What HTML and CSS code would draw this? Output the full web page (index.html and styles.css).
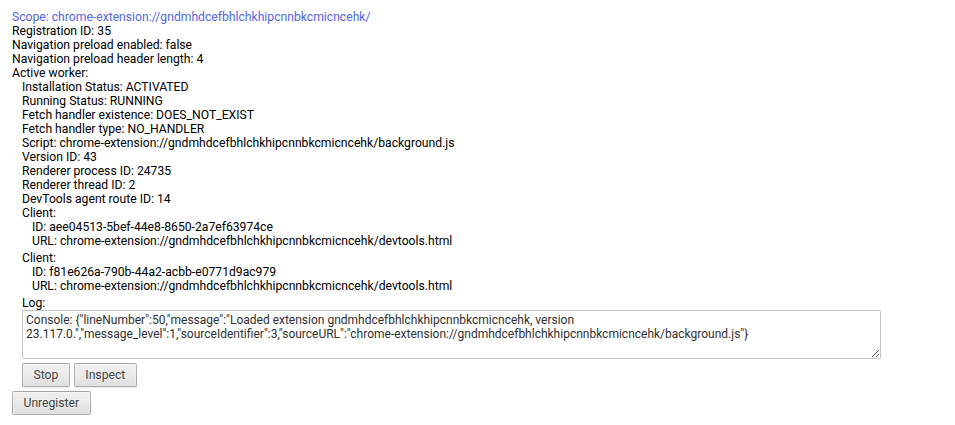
FILE: index.html
```html
<!DOCTYPE html>
<html>
<head>
<meta charset="utf-8">
<link rel="stylesheet" href="styles.css">
</head>
<body>
<div class="registration">
  <div class="scope">Scope: chrome-extension://gndmhdcefbhlchkhipcnnbkcmicncehk/</div>
  <div class="line">Registration ID: 35</div>
  <div class="line">Navigation preload enabled: false</div>
  <div class="line">Navigation preload header length: 4</div>
  <div class="line">Active worker:</div>
  <div class="worker">
    <div class="line">Installation Status: ACTIVATED</div>
    <div class="line">Running Status: RUNNING</div>
    <div class="line">Fetch handler existence: DOES_NOT_EXIST</div>
    <div class="line">Fetch handler type: NO_HANDLER</div>
    <div class="line">Script: chrome-extension://gndmhdcefbhlchkhipcnnbkcmicncehk/background.js</div>
    <div class="line">Version ID: 43</div>
    <div class="line">Renderer process ID: 24735</div>
    <div class="line">Renderer thread ID: 2</div>
    <div class="line">DevTools agent route ID: 14</div>
    <div class="client">
      <div class="line">Client:</div>
      <div class="client-info">
        <div class="line">ID: aee04513-5bef-44e8-8650-2a7ef63974ce</div>
        <div class="line">URL: chrome-extension://gndmhdcefbhlchkhipcnnbkcmicncehk/devtools.html</div>
      </div>
    </div>
    <div class="client">
      <div class="line">Client:</div>
      <div class="client-info">
        <div class="line">ID: f81e626a-790b-44a2-acbb-e0771d9ac979</div>
        <div class="line">URL: chrome-extension://gndmhdcefbhlchkhipcnnbkcmicncehk/devtools.html</div>
      </div>
    </div>
    <div class="line">Log:</div>
    <textarea class="log" readonly>Console: {"lineNumber":50,"message":"Loaded extension gndmhdcefbhlchkhipcnnbkcmicncehk, version 23.117.0.","message_level":1,"sourceIdentifier":3,"sourceURL":"chrome-extension://gndmhdcefbhlchkhipcnnbkcmicncehk/background.js"}</textarea>
    <div class="actions">
      <button class="btn">Stop</button>
      <button class="btn">Inspect</button>
    </div>
  </div>
  <div class="actions">
    <button class="btn">Unregister</button>
  </div>
</div>
</body>
</html>
```

FILE: styles.css
```css
html, body {
  margin: 0;
  background: #fff;
}
body {
  font-family: Roboto, "Liberation Sans", sans-serif;
  font-size: 12.17px;
  line-height: 14px;
  color: #000;
}
.registration {
  padding: 10px 0 0 12px;
}
.scope {
  color: rgb(85, 102, 221);
}
.worker {
  padding-left: 10px;
}
.client {
  margin-bottom: 3px;
}
.client-info {
  padding-left: 10px;
}
.log {
  display: block;
  box-sizing: border-box;
  width: 859px;
  height: 49px;
  margin: 0;
  padding: 2px 3px;
  border: 1px solid #c4c4c4;
  border-radius: 1px;
  font-family: Roboto, "Liberation Sans", sans-serif;
  font-size: 12px;
  line-height: 14px;
  color: #303030;
  background: #fff;
  resize: both;
  overflow: hidden;
}
.actions {
  display: flex;
  gap: 4px;
  margin-top: 4px;
}
.btn {
  box-sizing: border-box;
  height: 24px;
  padding: 0 10.5px;
  font-family: Roboto, "Liberation Sans", sans-serif;
  font-size: 12.17px;
  color: #444;
  border: 1px solid rgba(0, 0, 0, 0.25);
  border-radius: 2px;
  background: linear-gradient(#ededed, #ededed 38%, #dedede);
  box-shadow: 0 1px 0 rgba(0, 0, 0, 0.08), inset 0 1px 2px rgba(255, 255, 255, 0.75);
  text-shadow: 0 1px 0 #f0f0f0;
  margin: 0;
}
```
